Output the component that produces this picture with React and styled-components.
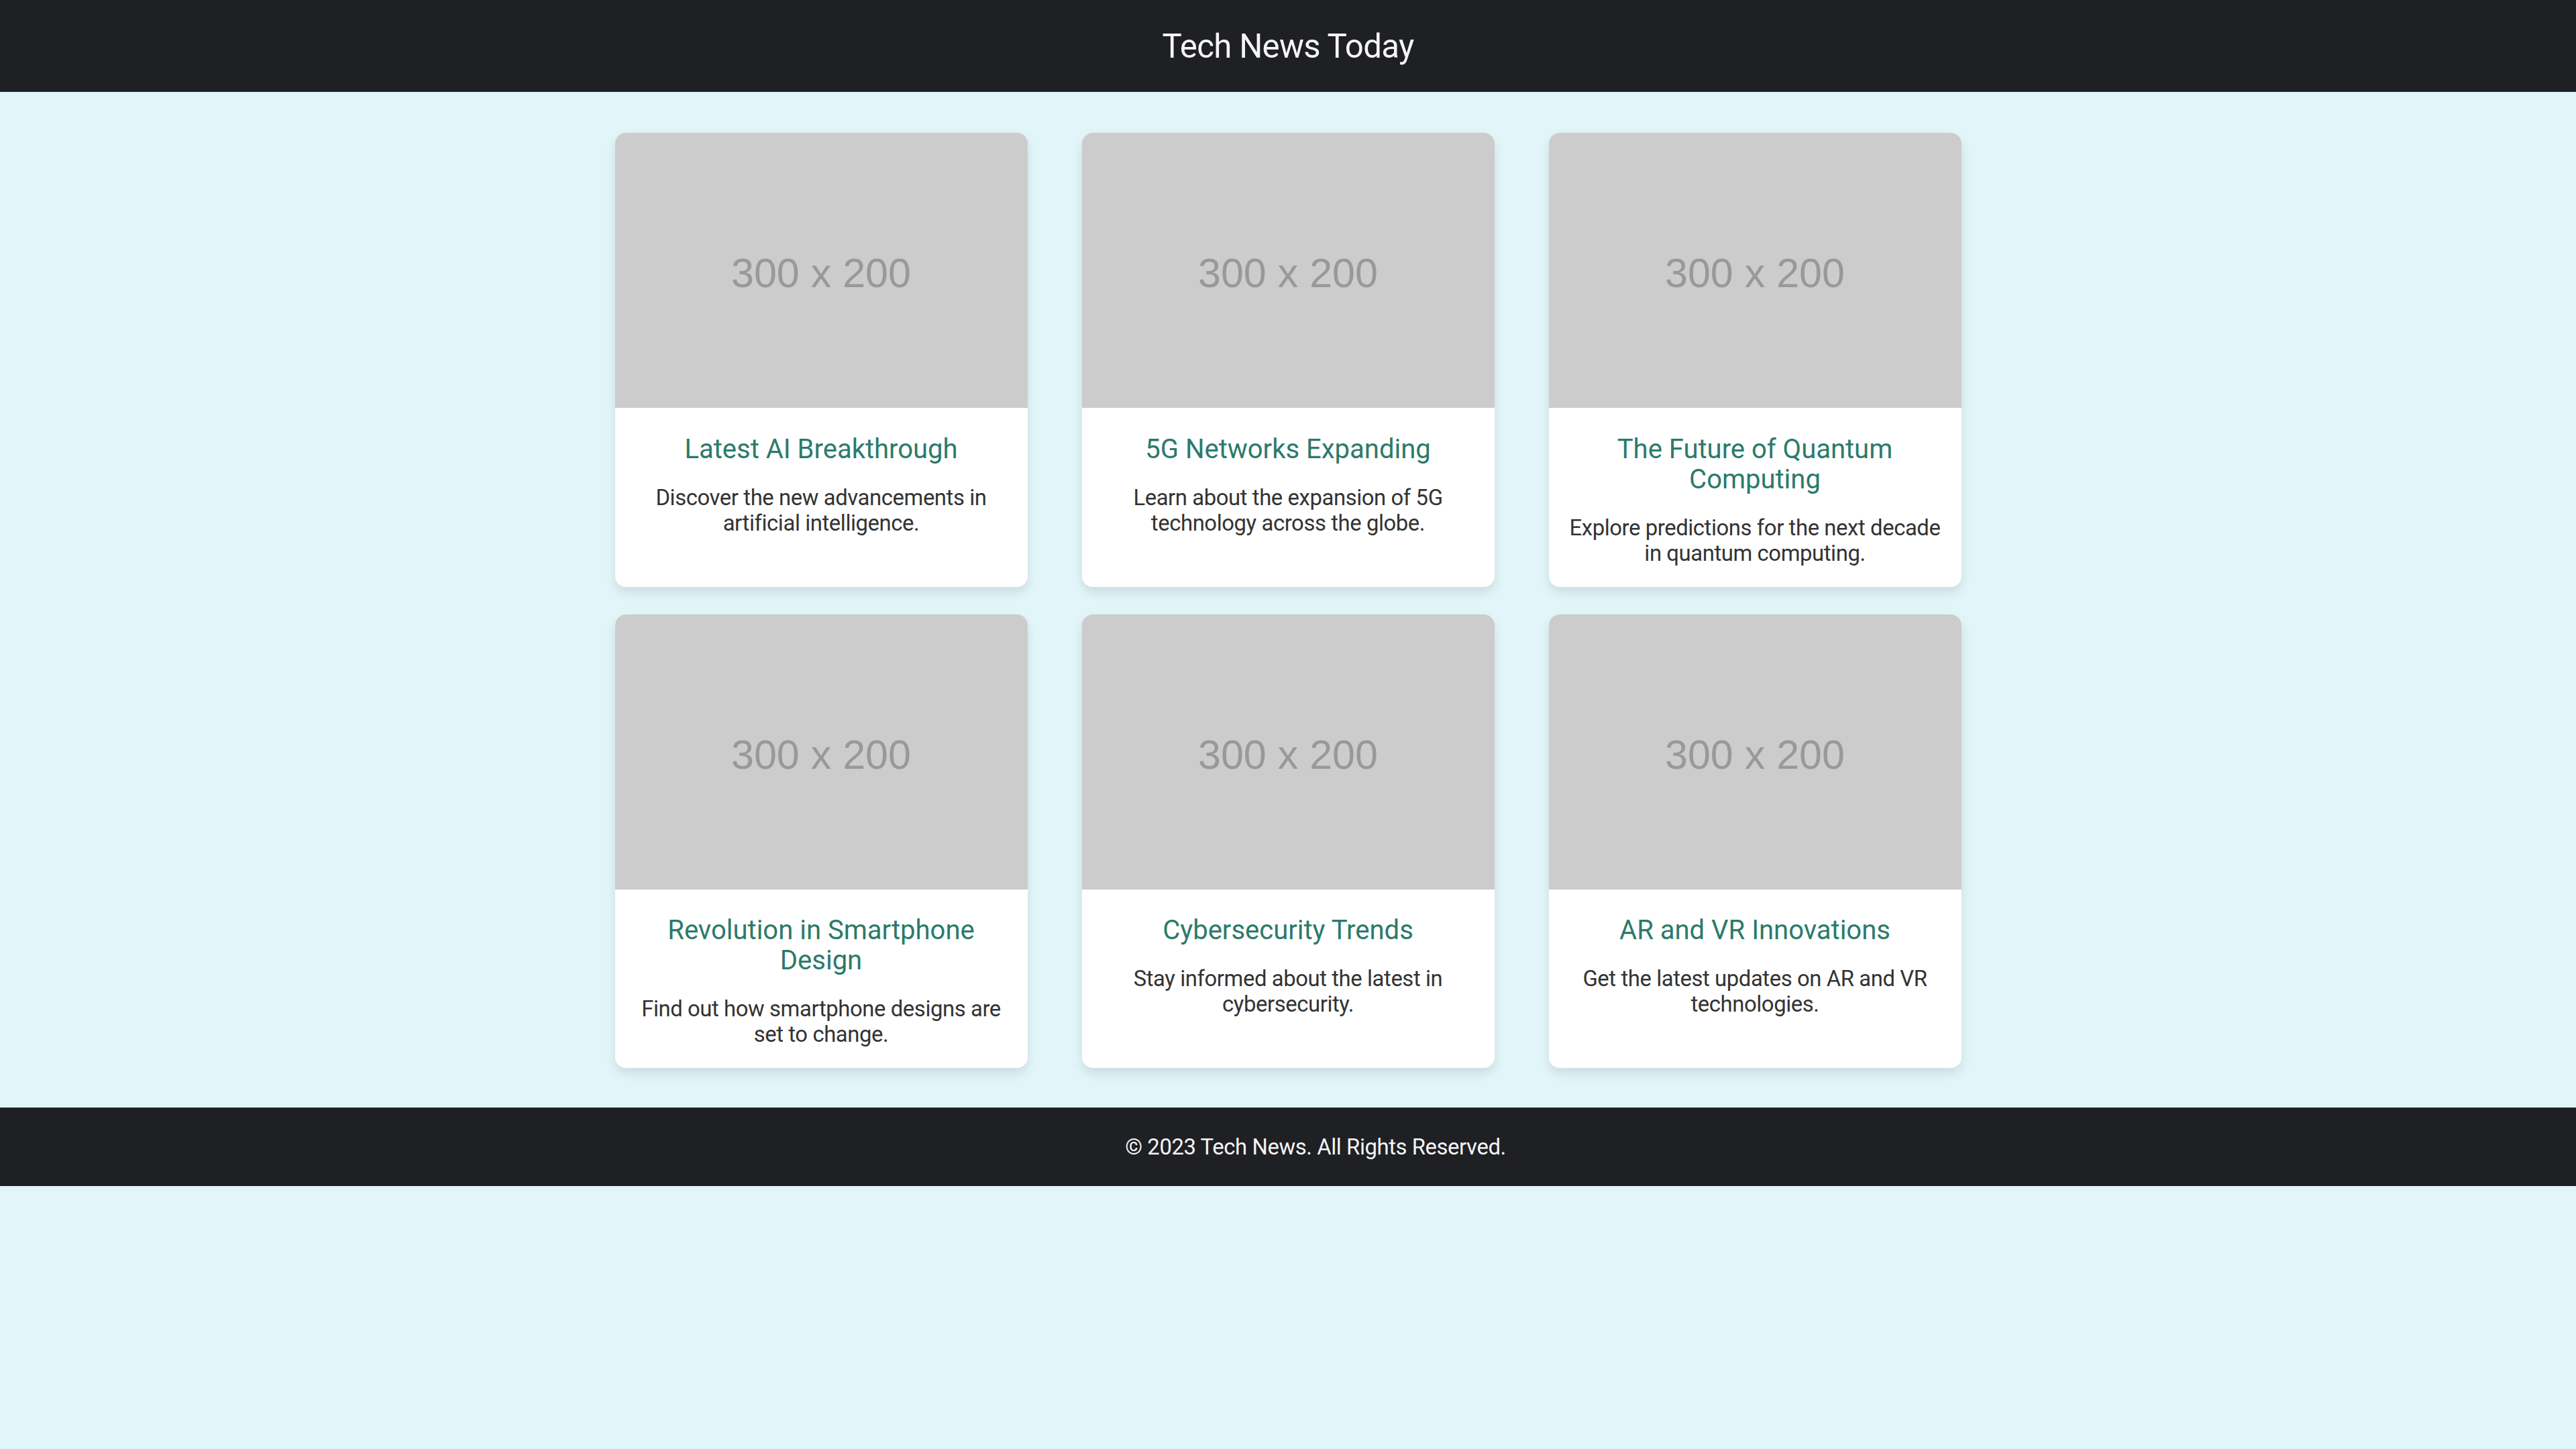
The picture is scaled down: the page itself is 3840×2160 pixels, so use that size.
import styled, { createGlobalStyle } from 'styled-components';

const GlobalStyle = createGlobalStyle`
  html, body {
    margin: 0;
    padding: 0;
    background: #e2f5f9;
    font-family: Roboto, "Liberation Sans", Arial, sans-serif;
    overflow-x: hidden;
  }
`;

const Page = styled.div`
  display: flex;
  flex-direction: column;
`;

const Header = styled.header`
  background: #1f2023;
  padding: 39.5px 0;
  text-align: center;
`;

const Title = styled.h1`
  margin: 0;
  color: #f5f5f5;
  font-size: 49.2px;
  font-weight: 400;
  line-height: normal;
  letter-spacing: -0.014em;
`;

const Grid = styled.main`
  display: grid;
  grid-template-columns: repeat(3, 615px);
  column-gap: 81px;
  row-gap: 41px;
  justify-content: center;
  padding: 61px 0 59px;
`;

const Card = styled.article`
  background: #fff;
  border-radius: 16px;
  overflow: hidden;
  box-shadow: 0 8px 16px rgba(0, 0, 0, 0.1);
  display: flex;
  flex-direction: column;
`;

const Placeholder = styled.div`
  width: 100%;
  aspect-ratio: 3 / 2;
  background: #cccccc;
  color: #999999;
  display: flex;
  align-items: center;
  justify-content: center;
  font-family: "Liberation Sans", Arial, sans-serif;
  font-size: 61px;
  padding-top: 8px;
  box-sizing: border-box;
`;

const Body = styled.div`
  padding: 30.75px;
  text-align: center;
`;

const CardTitle = styled.h3`
  margin: 8px 0 31px;
  color: #2c7a6a;
  font-size: 40px;
  font-weight: 400;
  line-height: 45px;
`;

const Text = styled.p`
  margin: 0;
  color: #333;
  font-size: 32.8px;
  line-height: normal;
  letter-spacing: -0.012em;
`;

const Footer = styled.footer`
  background: #1f2023;
  padding: 39.6px 0 39.6px 82px;
  text-align: center;
  color: #f5f5f5;
  font-size: 32.8px;
  line-height: normal;
  letter-spacing: -0.012em;
`;

const articles = [
  { title: 'Latest AI Breakthrough', text: 'Discover the new advancements in artificial intelligence.' },
  { title: '5G Networks Expanding', text: 'Learn about the expansion of 5G technology across the globe.' },
  { title: 'The Future of Quantum Computing', text: 'Explore predictions for the next decade in quantum computing.' },
  { title: 'Revolution in Smartphone Design', text: 'Find out how smartphone designs are set to change.' },
  { title: 'Cybersecurity Trends', text: 'Stay informed about the latest in cybersecurity.' },
  { title: 'AR and VR Innovations', text: 'Get the latest updates on AR and VR technologies.' },
];

const App = () => (
  <Page>
    <GlobalStyle />
    <Header>
      <Title>Tech News Today</Title>
    </Header>
    <Grid>
      {articles.map((a) => (
        <Card key={a.title}>
          <Placeholder>300 x 200</Placeholder>
          <Body>
            <CardTitle>{a.title}</CardTitle>
            <Text>{a.text}</Text>
          </Body>
        </Card>
      ))}
    </Grid>
    <Footer>&copy; 2023 Tech News. All Rights Reserved.</Footer>
  </Page>
);

export default App;
